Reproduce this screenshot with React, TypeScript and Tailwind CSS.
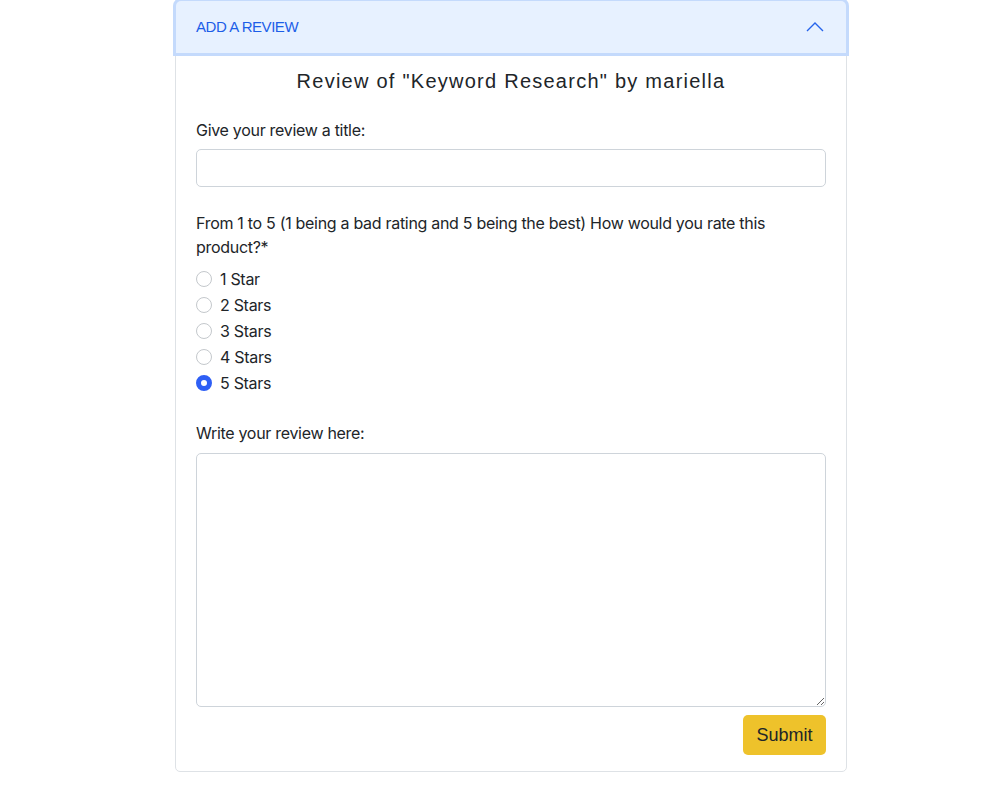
import { useState } from "react";

const ratings = ["1 Star", "2 Stars", "3 Stars", "4 Stars", "5 Stars"];

export default function App() {
  const [rating, setRating] = useState("5 Stars");

  return (
    <div className="min-h-screen bg-white font-['Inter',sans-serif] tracking-[-0.3px] text-[#212529]">
      <div className="ml-[175px] w-[672px] pb-8">
        <div className="rounded-[5px] border border-[#dee2e6]">
          {/* Accordion header */}
          <button className="relative flex h-[52px] w-full items-center justify-between rounded-t-[5px] bg-[#e7f1ff] px-5 text-left shadow-[0_0_0_3px_#c4dafc] outline-none">
            <span className="font-['Liberation_Sans',sans-serif] text-[15px] tracking-[-0.45px] text-[#1c5ee8]">
              ADD A REVIEW
            </span>
            <svg width="18" height="12" viewBox="0 0 18 12" fill="none" className="mr-[2px]">
              <path d="M1 10 L9 2 L17 10" stroke="#2563eb" strokeWidth="1.4" />
            </svg>
          </button>

          {/* Accordion body */}
          <div className="px-5 pt-[13px] pb-4">
            <h2 className="text-center font-['Liberation_Sans',sans-serif] text-[20px] font-normal tracking-[1.25px] text-[#212529]">
              Review of "Keyword Research" by mariella
            </h2>

            <form className="mt-[22px]" onSubmit={(e) => e.preventDefault()}>
              <label className="mb-[7px] block text-[16px] leading-6">Give your review a title:</label>
              <input
                type="text"
                className="block h-[38px] w-full rounded-[5px] border border-[#ced4da] px-3 outline-none"
              />

              <p className="mt-[24px] text-[16px] leading-6">
                From 1 to 5 (1 being a bad rating and 5 being the best) How would you rate this product?*
              </p>
              <div className="mt-[7px] flex flex-col">
                {ratings.map((r) => (
                  <label key={r} className="flex h-[26px] items-center gap-2 text-[16px]">
                    <input
                      type="radio"
                      name="rating"
                      checked={rating === r}
                      onChange={() => setRating(r)}
                      className="h-4 w-4 appearance-none rounded-full border border-[#c4c8cc] bg-white checked:border-[5px] checked:border-[#2e5ff5]"
                    />
                    <span>{r}</span>
                  </label>
                ))}
              </div>

              <label className="mt-[25px] mb-2 block text-[16px] leading-6">Write your review here:</label>
              <textarea className="block h-[254px] w-full resize-y rounded-[5px] border border-[#ced4da] p-3 outline-none" />

              <div className="mt-2 flex justify-end">
                <button
                  type="submit"
                  className="h-10 w-[83px] rounded-[5px] bg-[#eec22b] font-['Liberation_Sans',sans-serif] text-[18px] tracking-normal text-[#212529]"
                >
                  Submit
                </button>
              </div>
            </form>
          </div>
        </div>
      </div>
    </div>
  );
}
